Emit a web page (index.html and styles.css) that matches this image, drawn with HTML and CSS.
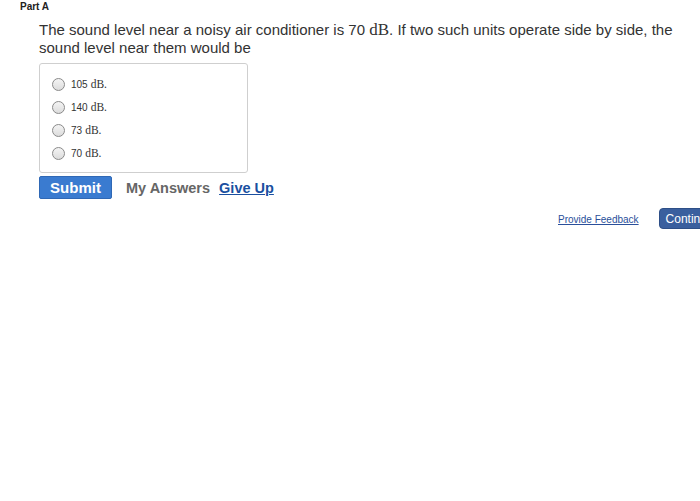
FILE: index.html
```html
<!DOCTYPE html>
<html>
<head>
<meta charset="utf-8">
<link rel="stylesheet" href="styles.css">
</head>
<body>
<div class="page">
  <div class="part">Part A</div>
  <div class="main">
    <p class="question">The sound level near a noisy air conditioner is 70&nbsp;<span class="math">dB</span>. If two such units operate side by side, the sound level near them would be</p>
    <div class="choices">
      <label class="choice"><span class="radio"></span><span class="num">105</span><span class="math">dB.</span></label>
      <label class="choice"><span class="radio"></span><span class="num">140</span><span class="math">dB.</span></label>
      <label class="choice"><span class="radio"></span><span class="num">73</span><span class="math">dB.</span></label>
      <label class="choice"><span class="radio"></span><span class="num">70</span><span class="math">dB.</span></label>
    </div>
    <div class="actions">
      <button class="submit">Submit</button>
      <span class="myanswers">My Answers</span>
      <a class="giveup">Give Up</a>
    </div>
  </div>
  <div class="footer">
    <a class="feedback">Provide Feedback</a>
    <button class="continue">Continue</button>
  </div>
</div>
</body>
</html>
```
FILE: styles.css
```css
html, body {
  margin: 0;
  padding: 0;
  background: #fff;
}
body {
  font-family: "Liberation Sans", Arial, sans-serif;
  color: #222;
  width: 700px;
  height: 501px;
  overflow: hidden;
}
.part {
  font-size: 10px;
  font-weight: bold;
  padding: 1px 0 0 20px;
  line-height: 12px;
  color: #222;
}
.main {
  padding-left: 39px;
}
.question {
  margin: 8px 0 0 0;
  font-size: 15px;
  line-height: 18px;
  width: 645px;
  color: #333;
}
.math {
  font-family: "Liberation Serif", "Times New Roman", serif;
}
.question .math {
  font-size: 17px;
}
.choices {
  margin-top: 6px;
  display: flex;
  flex-direction: column;
  padding-top: 13px;
  padding-left: 12px;
  gap: 9px;
  box-sizing: border-box;
  height: 110px;
  width: 209px;
  border: 1px solid #cfcfcf;
  border-radius: 3px;
}
.choice {
  display: flex;
  align-items: center;
  height: 14px;
  font-size: 10px;
  color: #333;
}
.choice .math {
  font-size: 11.5px;
  margin-left: 3px;
}
.radio {
  width: 11px;
  height: 11px;
  border-radius: 50%;
  border: 1px solid #8a8a8a;
  background: linear-gradient(#f4f4f4, #dcdcdc);
  margin-right: 6px;
  flex: none;
}
.actions {
  margin-top: 3px;
  display: flex;
  align-items: center;
  height: 23px;
}
.submit {
  width: 73px;
  height: 23px;
  background: #3a7bd0;
  border: 1px solid #2f68b5;
  border-radius: 2px;
  color: #fff;
  font-family: "Liberation Sans", Arial, sans-serif;
  font-weight: bold;
  font-size: 15px;
  padding: 0;
  margin-right: 14px;
}
.myanswers {
  font-weight: bold;
  font-size: 14.5px;
  color: #666;
  margin-right: 9px;
}
.giveup {
  font-weight: bold;
  font-size: 14.5px;
  color: #1a4fa0;
  text-decoration: underline;
}
.footer {
  display: flex;
  align-items: center;
  margin-top: 9px;
  padding-left: 558px;
  height: 21px;
}
.feedback {
  font-size: 10px;
  color: #2a4f9a;
  text-decoration: underline;
  white-space: nowrap;
  margin-right: 20px;
  margin-top: 2px;
}
.continue {
  flex: none;
  height: 21px;
  padding: 0 6px;
  background: #3a5f9e;
  border: 1px solid #2e4f87;
  border-radius: 4px;
  color: #fff;
  font-family: "Liberation Sans", Arial, sans-serif;
  font-size: 12px;
  white-space: nowrap;
}
```
